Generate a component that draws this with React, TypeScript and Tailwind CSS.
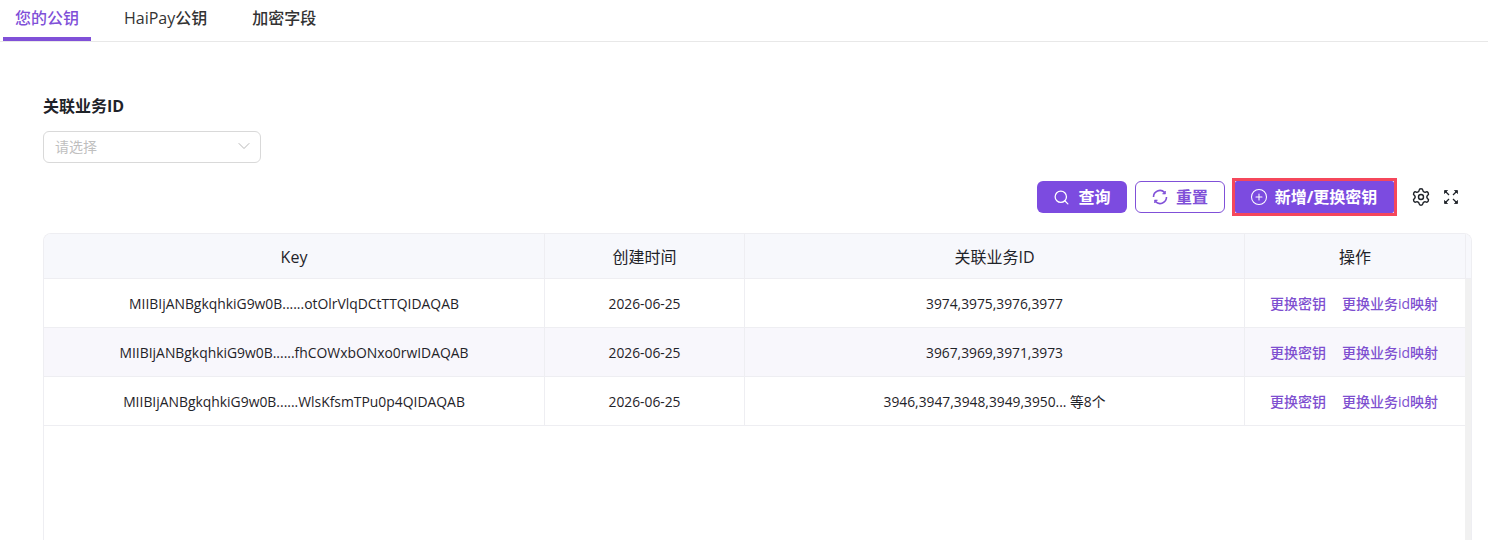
import { Search, CirclePlus, Settings, ChevronDown } from "lucide-react";

const rows = [
  { key: "MIIBIjANBgkqhkiG9w0B......otOlrVlqDCtTTQIDAQAB", time: "2026-06-25", ids: "3974,3975,3976,3977" },
  { key: "MIIBIjANBgkqhkiG9w0B......fhCOWxbONxo0rwIDAQAB", time: "2026-06-25", ids: "3967,3969,3971,3973" },
  { key: "MIIBIjANBgkqhkiG9w0B......WlsKfsmTPu0p4QIDAQAB", time: "2026-06-25", ids: "3946,3947,3948,3949,3950... 等8个" },
];

function FullscreenIcon() {
  return (
    <svg width="16" height="16" viewBox="0 0 16 16" fill="#1f2329" stroke="#1f2329" strokeWidth="1.300">
      <path d="M1.500 1.500h3l-3 3z" strokeWidth="0.800" />
      <path d="M2 2l4 4" />
      <path d="M14.500 1.500h-3l3 3z" strokeWidth="0.800" />
      <path d="M14 2l-4 4" />
      <path d="M1.500 14.500h3l-3-3z" strokeWidth="0.800" />
      <path d="M2 14l4-4" />
      <path d="M14.500 14.500h-3l3-3z" strokeWidth="0.800" />
      <path d="M14 14l-4-4" />
    </svg>
  );
}

function ReloadIcon() {
  return (
    <svg width="16" height="16" viewBox="0 0 16 16" fill="none" stroke="currentColor" strokeWidth="1.600">
      <path d="M1.500 8a6.500 6.500 0 0 1 11-4.700" />
      <path d="M14.500 8a6.500 6.500 0 0 1-11 4.700" />
      <path d="M13.500 2v3h-3z" fill="currentColor" strokeWidth="0.600" />
      <path d="M2.500 14v-3h3z" fill="currentColor" strokeWidth="0.600" />
    </svg>
  );
}

export default function App() {
  return (
    <div className="w-[1488px] h-[540px] overflow-hidden bg-white text-[#1f2329] font-['Open_Sans','Noto_Sans_CJK_SC',sans-serif]">
      {/* Tabs */}
      <div className="flex h-[42px] items-stretch border-b border-[#e8e8e8] pl-[3px] text-[16px]">
        <div className="w-[88px] h-[41px] border-b-[4px] border-[#8050d8] text-center leading-[36px] font-medium text-[#8050d8]">您的公钥</div>
        <div className="ml-[33px] leading-[36px] font-medium text-[#333]">HaiPay公钥</div>
        <div className="ml-[45px] leading-[36px] font-medium text-[#333]">加密字段</div>
      </div>

      <div className="pl-[43px] pr-[16px]">
        {/* Filter */}
        <div className="mt-[52px] text-[16px] leading-[24px] font-bold text-[#1f2329]">关联业务ID</div>
        <div className="mt-[13px] flex h-[32px] w-[218px] items-center justify-between rounded-[6px] border border-[#d9d9d9] pb-[2px] pl-[11px] pr-[6px] text-[14px] text-[#bfbfbf]">
          请选择
          <ChevronDown size={20} strokeWidth={1} className="text-[#aaa]" />
        </div>

        {/* Toolbar */}
        <div className="mt-[13px] flex h-[42px] items-center justify-end pr-[13px]">
          <button className="flex h-[32px] w-[90px] items-center justify-center gap-[8px] rounded-[6px] bg-[#7c4be0] text-[16px] font-bold text-white">
            <Search size={17} strokeWidth={1.8} />
            查询
          </button>
          <button className="ml-[8px] flex h-[32px] w-[90px] items-center justify-center gap-[8px] rounded-[6px] border border-[#8050d8] bg-white text-[16px] font-bold text-[#8050d8]">
            <ReloadIcon />
            重置
          </button>
          <div className="ml-[7px] h-[38px] w-[165px] border-[3px] border-[#f5475b] bg-white">
            <button className="flex h-full w-full items-center justify-center gap-[7px] rounded-[2px] bg-[#7c4be0] pr-[2px] text-[16px] font-bold text-white">
              <CirclePlus size={18} strokeWidth={1.4} />
              新增/更换密钥
            </button>
          </div>
          <Settings size={20} strokeWidth={1.7} className="ml-[14px]" />
          <span className="ml-[12px]"><FullscreenIcon /></span>
        </div>

        {/* Table */}
        <div className="mt-[15px] h-[320px] overflow-hidden rounded-t-[8px] border-l border-r border-t border-[#eeeef2]">
          <div className="flex h-[45px] border-b border-[#eeeef2] bg-[#f7f8fc] text-center text-[16px] leading-[46px]">
            <div className="w-[501px] border-r border-[#eeeef2]">Key</div>
            <div className="w-[200px] border-r border-[#eeeef2]">创建时间</div>
            <div className="w-[500px] border-r border-[#eeeef2]">关联业务ID</div>
            <div className="w-[221px] border-r border-[#eeeef2]">操作</div>
            <div className="flex-1" />
          </div>
          <div className="flex h-full">
            <div className="w-[1421px] shrink-0">
              {rows.map((row, i) => (
                <div key={i} className={`flex h-[49px] border-b border-[#eeeef2] text-center text-[13.8px] leading-[50px] ${i === 1 ? "bg-[#f8f7fc]" : "bg-white"}`}>
                  <div className="w-[501px] border-r border-[#eeeef2] text-[13.9px]">{row.key}</div>
                  <div className="w-[200px] border-r border-[#eeeef2]">{row.time}</div>
                  <div className="w-[500px] border-r border-[#eeeef2]">{row.ids}</div>
                  <div className="flex flex-1 justify-center gap-[16px] pr-[2px] text-[14px] font-medium text-[#7e4fd0]">
                    <span>更换密钥</span>
                    <span>更换业务id映射</span>
                  </div>
                </div>
              ))}
            </div>
            <div className="flex-1 bg-[#f1f1f1]" />
          </div>
        </div>
      </div>
    </div>
  );
}
